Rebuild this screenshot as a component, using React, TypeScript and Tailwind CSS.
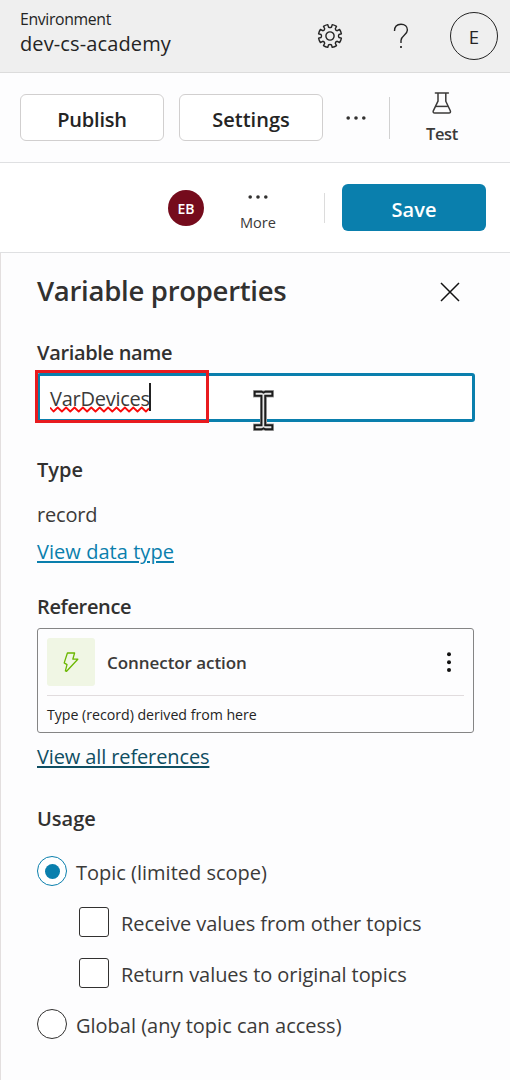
import type { ReactNode } from "react";

function EllipsisIcon() {
  return (
    <svg width="20" height="4" viewBox="0 0 20 4" fill="#323130">
      <circle cx="2.2" cy="2" r="1.8" />
      <circle cx="10" cy="2" r="1.8" />
      <circle cx="17.8" cy="2" r="1.8" />
    </svg>
  );
}

function GearIcon() {
  return (
    <svg width="26" height="26" viewBox="-13 -13 26 26" fill="none" stroke="#242424" strokeWidth="1.4" strokeLinejoin="round">
      <path d="M-2.2 -11.4 L-1.5 -8.9 Q0 -8 1.5 -8.9 L2.2 -11.4 Q4.6 -11 6.5 -9.6 L5.3 -7.2 Q5.6 -5.6 7.2 -5.3 L9.6 -6.5 Q11 -4.6 11.4 -2.2 L8.9 -1.5 Q8 0 8.9 1.5 L11.4 2.2 Q11 4.6 9.6 6.5 L7.2 5.3 Q5.6 5.6 5.3 7.2 L6.5 9.6 Q4.6 11 2.2 11.4 L1.5 8.9 Q0 8 -1.5 8.9 L-2.2 11.4 Q-4.6 11 -6.5 9.6 L-5.3 7.2 Q-5.6 5.6 -7.2 5.3 L-9.6 6.5 Q-11 4.6 -11.4 2.2 L-8.9 1.5 Q-8 0 -8.9 -1.5 L-11.4 -2.2 Q-11 -4.6 -9.6 -6.5 L-7.2 -5.3 Q-5.6 -5.6 -5.3 -7.2 L-6.5 -9.6 Q-4.6 -11 -2.2 -11.4 Z" />
      <circle r="4.1" />
    </svg>
  );
}

function HelpIcon() {
  return (
    <svg width="16" height="26" viewBox="0 0 16 26" fill="none" stroke="#242424" strokeWidth="1.4">
      <path d="M1.5 8 C1.5 3.6 4.2 1.2 8 1.2 C11.8 1.2 14.4 3.6 14.4 7 C14.4 12 8 12.4 8 17.5 V20" />
      <path d="M8 23 V25" strokeWidth="1.7" />
    </svg>
  );
}

function FlaskIcon() {
  return (
    <svg width="20" height="22" viewBox="0 0 20 22" fill="none" stroke="#3b3a39" strokeWidth="1.5" strokeLinejoin="round">
      <path d="M3.4 1 H16.4" strokeLinecap="round" />
      <path d="M6 1 V9.2 L1.3 18.8 C0.8 20 1.4 20.9 2.6 20.9 H17 C18.3 20.9 18.8 20 18.3 18.8 L13.8 9.2 V1" />
      <path d="M3.8 14.4 H15.9" />
    </svg>
  );
}

function BoltIcon() {
  return (
    <svg width="16" height="21" viewBox="0 0 16 21" fill="none" stroke="#6bb700" strokeWidth="1.3" strokeLinejoin="round">
      <path d="M4.4 1 H11.6 L9.8 7.2 H14.8 L3.6 19.3 L2.4 18.8 L4 12.6 L1.2 10.9 Z" />
    </svg>
  );
}

function Heading({ className, children }: { className: string; children: ReactNode }) {
  return <h3 className={`h-7 text-[20px] leading-[30px] font-semibold text-[#323130] ${className}`}>{children}</h3>;
}

function Radio({ checked = false, children }: { checked?: boolean; children: ReactNode }) {
  return (
    <label className="flex h-[30px] gap-[9px]">
      <span className={`flex size-[30px] items-center justify-center rounded-full border bg-white ${checked ? "border-[#0a7fad]" : "border-[#323130]"}`}>
        {checked && <span className="size-[15px] rounded-full bg-[#0a7fad]" />}
      </span>
      <span className="pt-[3px] text-[20px] leading-7 text-[#3b3a39]">{children}</span>
    </label>
  );
}

function Checkbox({ children }: { children: ReactNode }) {
  return (
    <label className="ml-[42px] flex h-[30px] gap-3">
      <span className="size-[30px] rounded-[3px] border border-[#323130] bg-white" />
      <span className="pt-[3px] text-[20px] leading-7 tracking-[-0.06px] text-[#3b3a39]">{children}</span>
    </label>
  );
}

export default function App() {
  return (
    <div className="flex h-[1080px] w-[510px] flex-col overflow-hidden bg-[#fdfdfe] font-['Open_Sans',sans-serif] whitespace-nowrap text-[#242424]">
      <header className="flex h-[73px] border-b border-[#dcdcdc] bg-[#efefef] pl-5">
        <div className="w-[297px] pt-[9px]">
          <div className="h-[21px] text-[15.8px] leading-5 tracking-[-0.35px]">Environment</div>
          <div className="h-7 text-[20px] leading-7 tracking-[0.12px]">dev-cs-academy</div>
        </div>
        <div className="flex h-[72px] items-center">
          <GearIcon />
          <div className="ml-[50px]"><HelpIcon /></div>
          <div className="ml-[41px] flex size-12 items-center justify-center rounded-full border border-[#242424] pt-px text-[18.5px]">E</div>
        </div>
      </header>

      <div className="flex h-[90px] border-b border-[#dfe0e2] pl-5">
        <button className="mt-[21px] h-[47px] w-36 rounded-md border border-[#d1cfcf] bg-white pt-[5px] text-[20px] leading-7 font-semibold tracking-[-0.2px]">Publish</button>
        <button className="mt-[21px] ml-[15px] h-[47px] w-36 rounded-md border border-[#d1cfcf] bg-white pt-[5px] text-[20px] leading-7 font-semibold">Settings</button>
        <div className="mt-[43px] ml-[23px]"><EllipsisIcon /></div>
        <div className="mt-6 ml-[23px] h-[42px] w-px bg-[#d1d1d1]" />
        <div className="ml-8 flex w-10 flex-col items-center pt-[19px] text-[#3b3a39]">
          <FlaskIcon />
          <span className="mt-2 text-[16.5px] leading-6 font-semibold tracking-[-0.4px]">Test</span>
        </div>
      </div>

      <div className="flex h-[90px] border-b border-[#dfe0e2] bg-white pl-[168px]">
        <div className="mt-[27px] flex size-9 items-center justify-center rounded-full bg-[#750b1c] text-[14px] font-semibold text-white">EB</div>
        <div className="ml-9 flex w-9 flex-col items-center pt-8 text-[#3b3a39]">
          <EllipsisIcon />
          <span className="mt-[11px] text-[14.6px] leading-6">More</span>
        </div>
        <div className="mt-[30px] ml-12 h-[30px] w-px bg-[#dcdcdc]" />
        <button className="mt-[21px] ml-[17px] h-[47px] w-36 rounded-md bg-[#0a7fad] pt-1 text-[20px] leading-7 font-semibold text-white">Save</button>
      </div>

      <main className="flex flex-1 flex-col border-l border-[#e3dfdf] pl-9">
        <div className="flex h-[55px] w-[438px] items-start pt-5">
          <h2 className="flex-1 text-[27.5px] leading-9 font-semibold tracking-[-0.28px] text-[#323130]">Variable properties</h2>
          <svg className="mt-[9px] mr-[15px]" width="20" height="20" viewBox="0 0 20 20" stroke="#111" strokeWidth="1.5">
            <path d="M1 1 L19 19 M19 1 L1 19" />
          </svg>
        </div>

        <Heading className="mt-[30px] tracking-[-0.33px]">Variable name</Heading>
        <div className="relative mt-[7px] h-[49px] w-[438px] rounded-[3px] border-[3px] border-[#0a7fad] bg-white pt-2 pl-[10px]">
          <div className="flex h-7">
            <span className="w-[99px] text-[20px] leading-[30px] tracking-[-0.25px] text-[#3b3a39]">VarDevices</span>
            <span className="-mt-px h-7 w-[2px] bg-[#222]" />
          </div>
          <svg className="absolute top-[30px] left-[10px]" width="99" height="7" viewBox="0 0 99 7" fill="none" stroke="#fa0a0a" strokeWidth="1.8">
            <path d="M0 1.5 Q2.1 1.5 4.2 3.5 T8.4 1.5" stroke="none" />
            <path d="M0 1.5 L3.5 5.5 L7.7 1.5 L11.9 5.5 L16.1 1.5 L20.3 5.5 L24.5 1.5 L28.7 5.5 L32.9 1.5 L37.1 5.5 L41.3 1.5 L45.5 5.5 L49.7 1.5 L53.9 5.5 L58.1 1.5 L62.3 5.5 L66.5 1.5 L70.7 5.5 L74.9 1.5 L79.1 5.5 L83.3 1.5 L87.5 5.5 L91.7 1.5 L95.9 5.5 L99 2.5" strokeLinejoin="round" />
          </svg>
          <div className="absolute -top-[6px] -left-[5px] h-[53px] w-[174px] border-[3px] border-[#e81b1f]" />
          <svg className="absolute top-[14px] left-[213px]" width="21" height="41" viewBox="0 0 21 41">
            <path d="M1.5 1.5 H8.5 L10.5 2.2 L12.5 1.5 H19.5 V6 H12.5 V35 H19.5 V39.5 H12.5 L10.5 38.8 L8.5 39.5 H1.5 V35 H8.5 V6 H1.5 Z" fill="#e4e4e4" stroke="#aaa" strokeWidth="3" />
            <path d="M1.7 1.7 H8.5 L10.5 2.6 L12.5 1.7 H19.3 V5.8 H12.2 V35.2 H19.3 V39.3 H12.5 L10.5 38.4 L8.5 39.3 H1.7 V35.2 H8.5 V5.8 H1.7 Z" fill="#e4e4e4" stroke="#1c1c1c" strokeWidth="1.9" />
          </svg>
        </div>

        <Heading className="mt-[33px]">Type</Heading>
        <div className="mt-[17px] h-7 text-[20px] leading-[30px] tracking-[-0.2px] text-[#3b3a39]">record</div>
        <a className="mt-[9px] h-7 w-fit text-[20px] leading-[30px] tracking-[0.05px] text-[#0a7fad] underline decoration-2 underline-offset-[2px]">View data type</a>

        <Heading className="mt-[27px] tracking-[-0.36px]">Reference</Heading>
        <section className="mt-2 h-[105px] w-[437px] rounded-[3px] border border-[#858585] px-[9px] pt-[9px]">
          <div className="flex h-[58px] border-b border-[#e1dcde]">
            <div className="flex size-12 items-center justify-center rounded-[3px] bg-[#f0f6e4]"><BoltIcon /></div>
            <span className="ml-3 flex-1 pt-[11px] text-[17px] leading-7 font-semibold tracking-[-0.06px] text-[#3b3a39]">Connector action</span>
            <svg className="mt-[14px] mr-3" width="6" height="21" viewBox="0 0 6 21" fill="#111">
              <circle cx="3" cy="2.3" r="2" />
              <circle cx="3" cy="10.2" r="2" />
              <circle cx="3" cy="18.1" r="2" />
            </svg>
          </div>
          <p className="pt-[7px] text-[14.2px] leading-6 tracking-[-0.03px]">Type (record) derived from here</p>
        </section>
        <a className="mt-[9px] h-7 w-fit text-[20px] leading-[30px] tracking-[-0.12px] text-[#0f4e62] underline decoration-2 underline-offset-[2px]">View all references</a>

        <Heading className="mt-[34px]">Usage</Heading>
        <div className="mt-6 flex flex-col gap-[21px]">
          <Radio checked>Topic (limited scope)</Radio>
          <Checkbox>Receive values from other topics</Checkbox>
          <Checkbox>Return values to original topics</Checkbox>
          <Radio>Global (any topic can access)</Radio>
        </div>
      </main>
    </div>
  );
}
